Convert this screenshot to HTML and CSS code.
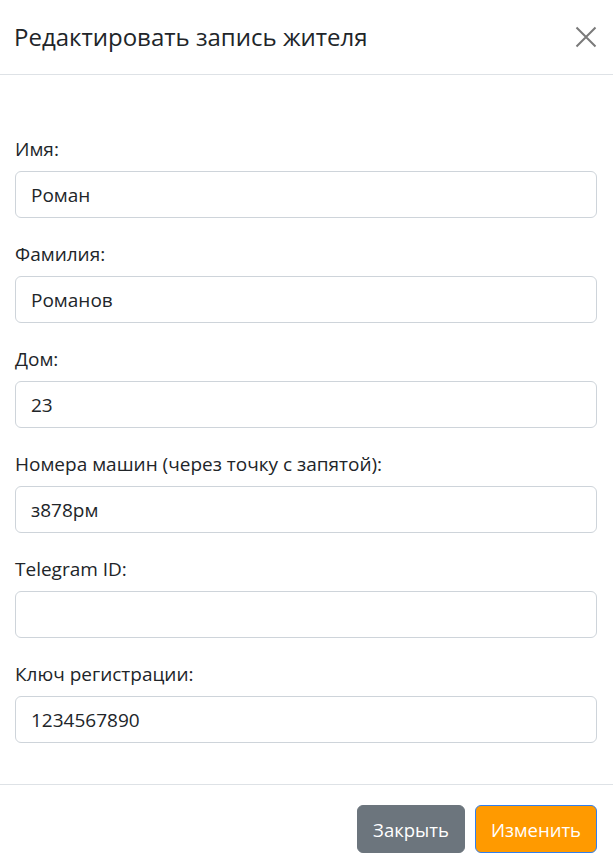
FILE: index.html
```html
<!DOCTYPE html>
<html lang="ru">
<head>
<meta charset="utf-8">
<title>Редактировать запись жителя</title>
<link rel="stylesheet" href="styles.css">
</head>
<body>
<div class="modal">
  <header class="modal-header">
    <h5 class="modal-title">Редактировать запись жителя</h5>
    <button class="btn-close" type="button" aria-label="Close">
      <svg width="22" height="22" viewBox="0 0 22 22"><path d="M1.5 1.5 L20.5 20.5 M20.5 1.5 L1.5 20.5" stroke="currentColor" stroke-width="2" fill="none"/></svg>
    </button>
  </header>
  <div class="modal-body">
    <div class="group">
      <label class="form-label">Имя:</label>
      <input class="form-control" type="text" value="Роман">
    </div>
    <div class="group">
      <label class="form-label">Фамилия:</label>
      <input class="form-control" type="text" value="Романов">
    </div>
    <div class="group">
      <label class="form-label">Дом:</label>
      <input class="form-control" type="text" value="23">
    </div>
    <div class="group">
      <label class="form-label">Номера машин (через точку с запятой):</label>
      <input class="form-control" type="text" value="з878рм">
    </div>
    <div class="group">
      <label class="form-label">Telegram ID:</label>
      <input class="form-control" type="text" value="">
    </div>
    <div class="group">
      <label class="form-label">Ключ регистрации:</label>
      <input class="form-control" type="text" value="1234567890">
    </div>
  </div>
  <footer class="modal-footer">
    <button class="btn btn-secondary" type="button">Закрыть</button>
    <button class="btn btn-warning" type="button">Изменить</button>
  </footer>
</div>
</body>
</html>
```
FILE: styles.css
```css
* { box-sizing: border-box; }
html, body { margin: 0; padding: 0; background: #fff; }
body {
  font-family: "Open Sans", "Noto Sans", sans-serif;
  color: #212529;
  font-size: 19px;
}
.modal { width: 613px; }
.modal-header {
  height: 75px;
  display: flex;
  align-items: center;
  justify-content: space-between;
  padding: 0 16px 0 14px;
  border-bottom: 1px solid #dee2e6;
}
.modal-title {
  margin: 0;
  font-size: 24px;
  font-weight: 500;
  line-height: 1.5;
}
.btn-close {
  border: 0;
  background: none;
  padding: 0;
  color: #7a7a7a;
  display: flex;
  margin-top: -1px;
}
.modal-body {
  padding: 61px 16px 18px 15px;
}
.group { display: flex; flex-direction: column; margin-bottom: 23px; }
.form-label {
  line-height: 27px;
  margin-bottom: 8px;
  font-size: 19px;
}
.form-control {
  height: 47px;
  border: 1px solid #ced4da;
  border-radius: 6px;
  padding: 0 15px;
  font-family: inherit;
  font-size: 19px;
  color: #212529;
  background: #fff;
}
.modal-footer {
  border-top: 1px solid #dee2e6;
  display: flex;
  justify-content: flex-end;
  gap: 10px;
  padding: 20px 16px 14px;
}
.btn {
  height: 48px;
  border-radius: 6px;
  font-family: inherit;
  font-size: 18.5px;
  color: #fff;
  padding: 0 12px;
  border: 1px solid transparent;
}
.btn-secondary { background: #6c757d; border-color: #6c757d; width: 108px; }
.btn-warning { background: #ff9a00; border-color: #2f7ff0; width: 122px; }
```
